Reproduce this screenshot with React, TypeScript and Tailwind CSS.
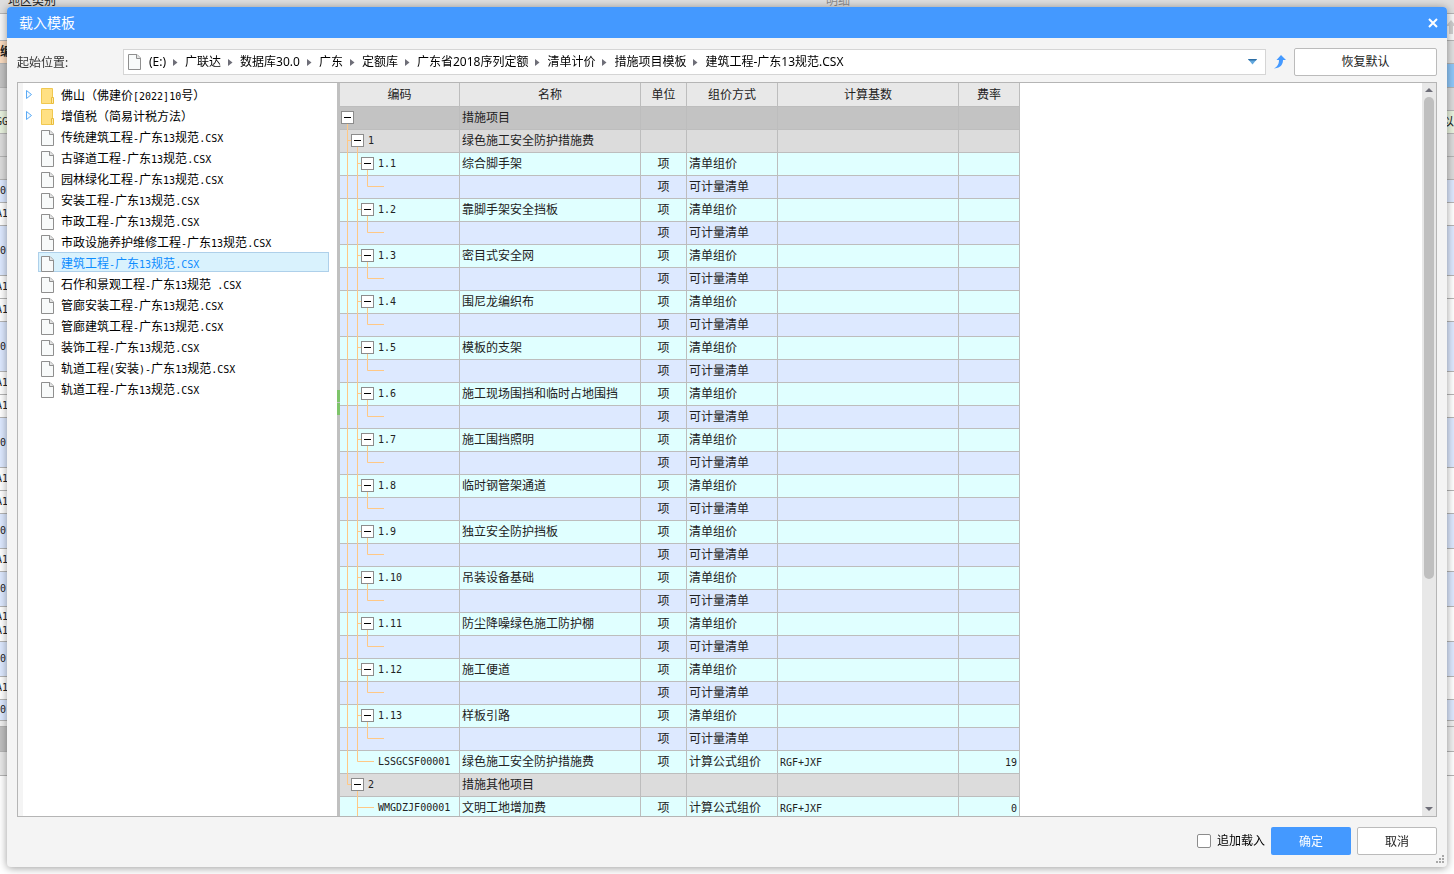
import React from 'react';

const path = ['(E:)', '广联达', '数据库30.0', '广东', '定额库', '广东省2018序列定额', '清单计价', '措施项目模板', '建筑工程-广东13规范.CSX'];

const folders = ['佛山（佛建价[2022]10号）', '增值税（简易计税方法）'];

const files = [
    '传统建筑工程-广东13规范.CSX',
    '古驿道工程-广东13规范.CSX',
    '园林绿化工程-广东13规范.CSX',
    '安装工程-广东13规范.CSX',
    '市政工程-广东13规范.CSX',
    '市政设施养护维修工程-广东13规范.CSX',
    '建筑工程-广东13规范.CSX',
    '石作和景观工程-广东13规范 .CSX',
    '管廊安装工程-广东13规范.CSX',
    '管廊建筑工程-广东13规范.CSX',
    '装饰工程-广东13规范.CSX',
    '轨道工程(安装)-广东13规范.CSX',
    '轨道工程-广东13规范.CSX',
];

const selected = '建筑工程-广东13规范.CSX';

type Row = {
    kind: 'root' | 'group' | 'lastGroup' | 'item' | 'child' | 'lastLeaf' | 'leaf';
    code?: string;
    name?: string;
    unit?: string;
    method?: string;
    base?: string;
    rate?: string;
};

const items = [
    '综合脚手架',
    '靠脚手架安全挡板',
    '密目式安全网',
    '围尼龙编织布',
    '模板的支架',
    '施工现场围挡和临时占地围挡',
    '施工围挡照明',
    '临时钢管架通道',
    '独立安全防护挡板',
    '吊装设备基础',
    '防尘降噪绿色施工防护棚',
    '施工便道',
    '样板引路',
];

const rows: Row[] = [
    { kind: 'root', name: '措施项目' },
    { kind: 'group', code: '1', name: '绿色施工安全防护措施费' },
    ...items.flatMap((name, i): Row[] => [
        { kind: 'item', code: `1.${i + 1}`, name, unit: '项', method: '清单组价' },
        { kind: 'child', unit: '项', method: '可计量清单' },
    ]),
    { kind: 'lastLeaf', code: 'LSSGCSF00001', name: '绿色施工安全防护措施费', unit: '项', method: '计算公式组价', base: 'RGF+JXF', rate: '19' },
    { kind: 'lastGroup', code: '2', name: '措施其他项目' },
    { kind: 'leaf', code: 'WMGDZJF00001', name: '文明工地增加费', unit: '项', method: '计算公式组价', base: 'RGF+JXF', rate: '0' },
];

const rowColor = {
    root: 'bg-[#c3c3c3]',
    group: 'bg-[#dcdcdc]',
    lastGroup: 'bg-[#dcdcdc]',
    item: 'bg-[#e0ffff]',
    child: 'bg-[#dde9ff]',
    lastLeaf: 'bg-[#e0ffff]',
    leaf: 'bg-[#e0ffff]',
};

const indent = {
    root: 'pl-px',
    group: 'pl-[11px]',
    lastGroup: 'pl-[11px]',
    item: 'pl-[21px]',
    child: 'pl-[38px]',
    lastLeaf: 'pl-[38px]',
    leaf: 'pl-[38px]',
};

const branch = {
    root: 'M7.5 17V23',
    group: 'M7.5 0V23M7.5 10.5H11M17.5 17V23',
    lastGroup: 'M7.5 0V10.5H11M17.5 17V23',
    item: 'M7.5 0V23M17.5 0V23M17.5 10.5H21M27.5 17V23',
    child: 'M7.5 0V23M17.5 0V23M27.5 0V10.5H44',
    lastLeaf: 'M7.5 0V23M17.5 0V10.5H34',
    leaf: 'M17.5 0V23M17.5 10.5H34',
};

const columns = [
    { title: '编码', width: 'w-[120px]' },
    { title: '名称', width: 'w-[181px]' },
    { title: '单位', width: 'w-[46px]' },
    { title: '组价方式', width: 'w-[91px]' },
    { title: '计算基数', width: 'w-[181px]' },
    { title: '费率', width: 'w-[61px]' },
];

// rows of the main window, only their ends show beside the dialog
const behind = [
    { h: 'h-[14px]', left: '地区类别', color: 'bg-[#dedede]' },
    { h: 'h-[27px]', left: '', color: 'bg-[#f7f7f7]' },
    { h: 'h-[23px]', left: '编', color: 'bg-[#fbdcc0]', right: 'bg-[#e0e0e0]' },
    { h: 'h-[24px]', left: '', color: 'bg-[#c3c3c3]', right: 'bg-[#8fc7f9]' },
    { h: 'h-[23px]', left: '', color: 'bg-[#dcdcdc]' },
    { h: 'h-[23px]', left: 'GG', color: 'bg-[#e9f3df]' },
    { h: 'h-[23px]', left: '', color: 'bg-[#dcdcdc]' },
    { h: 'h-[23px]', left: '', color: 'bg-[#dcdcdc]' },
    { h: 'h-[23px]', left: '0', color: 'bg-[#dde9ff]' },
    { h: 'h-[23px]', left: 'A1', color: 'bg-white' },
    { h: 'h-[50px]', left: '0', color: 'bg-[#dde9ff]' },
    { h: 'h-[23px]', left: 'A1', color: 'bg-white' },
    { h: 'h-[23px]', left: 'A1', color: 'bg-white' },
    { h: 'h-[50px]', left: '0', color: 'bg-[#dde9ff]' },
    { h: 'h-[23px]', left: 'A1', color: 'bg-white' },
    { h: 'h-[23px]', left: 'A1', color: 'bg-white' },
    { h: 'h-[50px]', left: '0', color: 'bg-[#dde9ff]' },
    { h: 'h-[23px]', left: 'A1', color: 'bg-white' },
    { h: 'h-[23px]', left: 'A1', color: 'bg-white' },
    { h: 'h-[35px]', left: '0', color: 'bg-[#dde9ff]' },
    { h: 'h-[23px]', left: 'A1', color: 'bg-white' },
    { h: 'h-[35px]', left: '0', color: 'bg-[#dde9ff]' },
    { h: 'h-[35px]', left: 'A1 A1', color: 'bg-white' },
    { h: 'h-[35px]', left: '0', color: 'bg-[#dde9ff]' },
    { h: 'h-[23px]', left: 'A1', color: 'bg-white' },
    { h: 'h-[21px]', left: '0', color: 'bg-[#dde9ff]' },
    { h: 'h-[6px]', left: '', color: 'bg-[#f0f0f0]' },
    { h: 'h-[25px]', left: '', color: 'bg-[#bfbfbf]', right: 'bg-[#f0f0f0]' },
    { h: 'h-[24px]', left: '', color: 'bg-[#e8e8e8]', right: 'bg-white' },
];

// latin runs take half the width of a chinese character
const Mixed = ({ text }: { text: string }) => (
    <>
        {text.split(/([\x20-\x7e]+)/).map((part, i) =>
            i % 2 ? (
                <span key={i} className="font-['DejaVu_Sans_Mono',monospace] text-[10px]">
                    {part}
                </span>
            ) : (
                part
            )
        )}
    </>
);

const FileIcon = () => (
    <svg width="13" height="16" viewBox="0 0 13 16" className="shrink-0">
        <path d="M.5 .5H9L12.5 4V15.5H.5Z" fill="#f8fafa" stroke="#8f8f8f" />
        <path d="M8.5 .5V4.5H12.5" fill="#e4e4e4" stroke="#8f8f8f" />
    </svg>
);

const FolderIcon = () => (
    <svg width="13" height="16" viewBox="0 0 13 16" className="shrink-0">
        <path d="M.5 .5H11.5V15.5H.5Z" fill="#ffe083" stroke="#f0c850" />
        <path d="M10.5 9.5H12.5V15.5H10.5Z" fill="#ffe9a5" stroke="#e9bd3c" />
    </svg>
);

const Background = () => (
    <div className="min-h-screen overflow-hidden bg-white text-xs text-[#222]">
        {behind.map((row, i) => (
            <div key={i} className={`flex overflow-hidden border-b border-[#b5b5b5] ${row.h} ${row.color}`}>
                {i === 0 ? (
                    <div className="flex w-full justify-between pl-2 leading-[2px]">
                        <span>{row.left}</span>
                        <span className="mr-[604px] text-[#8a8a8a]">明细</span>
                    </div>
                ) : (
                    <>
                        <div
                            className={`flex w-3 items-center leading-[14px] ${row.left === '编' ? 'font-bold' : ''} ${
                                row.left.length > 1 ? '-ml-1' : ''
                            }`}
                        >
                            <Mixed text={row.left} />
                        </div>
                        <div className={`ml-auto w-3 ${row.right || ''}`}>
                            {row.left === 'GG' && <span className="leading-[22px]">以</span>}
                            {i === 1 && (
                                <svg width="12" height="26" viewBox="0 0 12 26">
                                    <path d="M9 6L14 12H11V20H7V12H4Z" fill="#cfcfcf" />
                                </svg>
                            )}
                        </div>
                    </>
                )}
            </div>
        ))}
    </div>
);

const PathBar = () => (
    <div className="flex h-7 items-center">
        <span className="w-[106px] pt-px text-[#333]">起始位置:</span>
        <nav aria-label="起始位置" className="flex h-[26px] flex-1 items-center border border-[#d5d5d5] bg-white pr-2 pl-1 text-black">
            <FileIcon />
            <div className="ml-2 flex items-center whitespace-nowrap">
                {path.map((name, i) => (
                    <React.Fragment key={name}>
                        {i > 0 && (
                            <svg width="5" height="7" viewBox="0 0 5 7" className="mx-[7px]">
                                <path d="M0 0L4.5 3.5L0 7Z" fill="#6e6e78" />
                            </svg>
                        )}
                        <button>{name}</button>
                    </React.Fragment>
                ))}
            </div>
            <button aria-label="展开" className="ml-auto">
                <svg width="9" height="6" viewBox="0 0 9 6">
                    <path d="M0 0H9L4.5 5.5Z" fill="#62a8de" />
                    <path d="M0 0H9L8 1.5H1Z" fill="#2c6ea5" />
                </svg>
            </button>
        </nav>
        <button aria-label="上一级" className="mx-2">
            <svg width="12" height="14" viewBox="0 0 12 14">
                <path d="M7 0L12 5H9C9 9.500 6.500 13 0 13.500C3.500 11.500 5 9 5 5H2.500Z" fill="#4499ff" />
            </svg>
        </button>
        <button className="h-7 w-[143px] rounded-[2px] border border-[#bbb] bg-white text-[#222]">恢复默认</button>
    </div>
);

const Tree = () => (
    <ul className="w-[319px] shrink-0 border-l-[5px] border-[#f4f4f4] bg-white pt-px text-black">
        {folders.map((name) => (
            <li key={name} className="flex h-[21px] items-center pt-[3px] pl-[3px]">
                <svg width="6" height="9" viewBox="0 0 6 9" className="mr-[9px] mb-1">
                    <path d="M.5 .5L5.500 4.500L.5 8.500Z" fill="#f2f9ff" stroke="#5aaaf5" />
                </svg>
                <FolderIcon />
                <span className="ml-[7px]">
                    <Mixed text={name} />
                </span>
            </li>
        ))}
        {files.map((name) => (
            <li key={name} className="h-[21px] pr-2 pl-[15px]">
                <button
                    className={`flex h-5 w-full items-center border pt-1 pl-[2px] whitespace-pre ${
                        name === selected ? 'border-[#aed0ea] bg-[#d9f2fd] text-[#0d8cff]' : 'border-transparent'
                    }`}
                >
                    <FileIcon />
                    <span className="ml-[7px]">
                        <Mixed text={name} />
                    </span>
                </button>
            </li>
        ))}
    </ul>
);

const CodeCell = ({ row }: { row: Row }) => (
    <td className="relative border-r border-b border-[#bdbdbd] p-0 align-top">
        <svg width="60" height="23" className="absolute top-0 left-0">
            <path d={branch[row.kind]} fill="none" stroke="#ffc885" />
        </svg>
        <div className={`relative flex h-[21px] items-center whitespace-nowrap ${indent[row.kind]}`}>
            {['root', 'group', 'lastGroup', 'item'].includes(row.kind) && (
                <button aria-label="折叠" className="mr-1 flex size-[13px] items-center justify-center border border-[#8c8c8c] bg-white">
                    <span className="h-px w-[7px] bg-black" />
                </button>
            )}
            <Mixed text={row.code || ''} />
        </div>
    </td>
);

const cell = 'border-r border-b border-[#bdbdbd] px-[2px] py-0 whitespace-nowrap';

const Grid = () => (
    <div className="min-w-0 flex-1 overflow-hidden bg-white">
        <table className="w-[680px] table-fixed border-separate border-spacing-0 leading-5 text-[#222]">
            <thead>
                <tr className="h-6 bg-[#e8e8e8]">
                    {columns.map((col) => (
                        <th key={col.title} className={`border-r border-b border-[#bdbdbd] p-0 font-normal ${col.width}`}>
                            {col.title}
                        </th>
                    ))}
                </tr>
            </thead>
            <tbody>
                {rows.map((row, i) => (
                    <tr key={i} className={`h-[23px] ${rowColor[row.kind]}`}>
                        <CodeCell row={row} />
                        <td className={cell}>{row.name}</td>
                        <td className={`${cell} text-center`}>{row.unit}</td>
                        <td className={cell}>{row.method}</td>
                        <td className={cell}>
                            <Mixed text={row.base || ''} />
                        </td>
                        <td className={`${cell} text-right`}>
                            <Mixed text={row.rate || ''} />
                        </td>
                    </tr>
                ))}
            </tbody>
        </table>
    </div>
);

const ScrollBar = () => (
    <div className="flex w-[14px] flex-col items-center bg-[#e8e8e8] py-[5px]">
        <svg width="8" height="4" viewBox="0 0 8 4">
            <path d="M0 4L4 0L8 4Z" fill="#6e6e78" />
        </svg>
        <div className="mt-[5px] mb-auto h-2/3 w-[10px] rounded-full bg-[#bfbfbf]" />
        <svg width="8" height="4" viewBox="0 0 8 4">
            <path d="M0 0H8L4 4Z" fill="#6e6e78" />
        </svg>
    </div>
);

const Footer = () => (
    <div className="mt-[10px] flex h-7 items-center justify-end gap-[6px] text-[#222]">
        <label className="flex items-center gap-[6px] text-black">
            <input type="checkbox" className="size-[14px] appearance-none rounded-[2px] border border-[#8c8c8c] bg-white" />
            追加载入
        </label>
        <button className="h-7 w-20 rounded-[2px] bg-[#4499ff] pt-px text-white">确定</button>
        <button className="h-7 w-20 rounded-[2px] border border-[#bbb] bg-white pt-px">取消</button>
    </div>
);

const App = () => {
    return (
        <div className="font-['Noto_Sans','Noto_Sans_CJK_SC',sans-serif]">
            <Background />
            <div
                role="dialog"
                aria-label="载入模板"
                className="fixed inset-[7px] flex flex-col overflow-hidden rounded-[4px] bg-[#f4f4f4] text-xs shadow-[0_1px_8px_rgba(0,0,0,0.4)]"
            >
                <header className="flex h-[31px] shrink-0 items-center justify-between bg-[#4499ff] pr-[9px] pl-3 text-white">
                    <h1 className="pt-px text-sm">载入模板</h1>
                    <button aria-label="关闭">
                        <svg width="10" height="10" viewBox="0 0 10 10">
                            <path d="M1 1L9 9M9 1L1 9" stroke="#fff" strokeWidth="2" />
                        </svg>
                    </button>
                </header>
                <main className="flex min-h-0 flex-1 flex-col px-[10px] pt-[10px] pb-3">
                    <PathBar />
                    <div className="mt-[6px] flex min-h-0 flex-1 border border-[#b5b5b5]">
                        <Tree />
                        <div className="w-[3px] shrink-0 bg-[#c0c0c0] pt-[307px]">
                            <div className="h-3 bg-[#7ec46a]" />
                            <div className="mt-px h-3 bg-[#7ec46a]" />
                        </div>
                        <Grid />
                        <ScrollBar />
                    </div>
                    <Footer />
                </main>
                <svg width="8" height="8" viewBox="0 0 8 8" className="absolute right-[3px] bottom-1">
                    <path d="M6 0h2v2h-2zM3 3h2v2h-2zM6 3h2v2h-2zM0 6h2v2h-2zM3 6h2v2h-2zM6 6h2v2h-2z" fill="#a8a8a8" />
                </svg>
            </div>
        </div>
    );
};

export default App;
